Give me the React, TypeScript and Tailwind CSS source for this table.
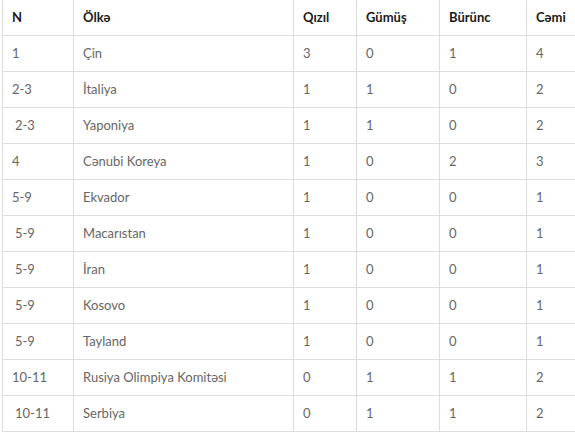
const rows: [string, string, string, string, string, string, boolean][] = [
  ['1', 'Çin', '3', '0', '1', '4', false],
  ['2-3', 'İtaliya', '1', '1', '0', '2', false],
  ['2-3', 'Yaponiya', '1', '1', '0', '2', true],
  ['4', 'Cənubi Koreya', '1', '0', '2', '3', false],
  ['5-9', 'Ekvador', '1', '0', '0', '1', false],
  ['5-9', 'Macarıstan', '1', '0', '0', '1', true],
  ['5-9', 'İran', '1', '0', '0', '1', true],
  ['5-9', 'Kosovo', '1', '0', '0', '1', true],
  ['5-9', 'Tayland', '1', '0', '0', '1', true],
  ['10-11', 'Rusiya Olimpiya Komitəsi', '0', '1', '1', '2', false],
  ['10-11', 'Serbiya', '0', '1', '1', '2', true],
]

const cols = 'grid grid-cols-[71px_220px_63px_83px_87px_80px]'
const cell = 'flex items-center border-l border-[#ddd] pl-[9px]'

export default function App() {
  return (
    <div className="w-[575px] h-[432px] overflow-hidden bg-white">
      <div className="ml-[2px] -mt-px w-[604px] border-t border-r border-[#ddd] font-['Lato',sans-serif] text-[13px]">
        <div className={`${cols} h-[36px] border-b border-[#ddd] font-bold text-[#1a1a1a]`}>
          <div className={cell}>N</div>
          <div className={cell}>Ölkə</div>
          <div className={cell}>Qızıl</div>
          <div className={cell}>Gümüş</div>
          <div className={cell}>Bürünc</div>
          <div className={cell}>Cəmi</div>
        </div>
        {rows.map(([n, country, g, s, b, t, indent]) => (
          <div key={country} className={`${cols} h-[36px] border-b border-[#ddd] text-[#666]`}>
            <div className={`${cell} ${indent ? 'pl-[12px]' : ''}`}>{n}</div>
            <div className={cell}>{country}</div>
            <div className={cell}>{g}</div>
            <div className={cell}>{s}</div>
            <div className={cell}>{b}</div>
            <div className={cell}>{t}</div>
          </div>
        ))}
      </div>
    </div>
  )
}
